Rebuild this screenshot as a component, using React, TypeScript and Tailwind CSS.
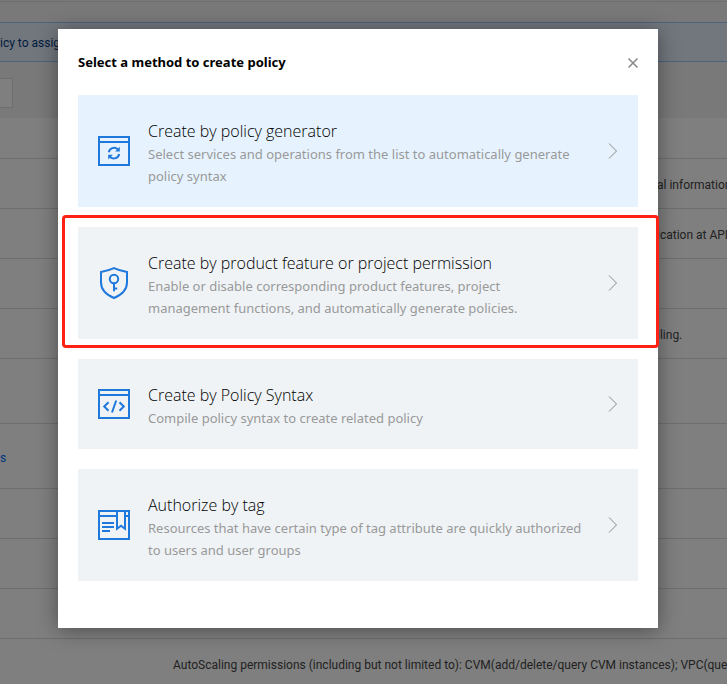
import type { ReactNode } from 'react'

interface Method {
  title: string
  description: string
  icon: ReactNode
  active?: boolean
  marked?: boolean
}

interface Row {
  height: string
  link?: string
  text?: string
  tail?: string
}

function GeneratorIcon() {
  return (
    <svg width="32" height="30" viewBox="0 0 32 30" fill="none" stroke="#1f78dc" strokeWidth="2">
      <path d="M1 1h30v28H1zM1 6h30" />
      <path d="M10.8 16.300a5.400 5.400 0 0 1 9-3M21.200 18a5.400 5.400 0 0 1-9 3" />
      <path d="M21.800 10.800v4.700h-4.700zM10.200 23.500v-4.700h4.700z" fill="#1f78dc" stroke="none" />
    </svg>
  )
}

function ShieldIcon() {
  return (
    <svg width="32" height="32" viewBox="0 0 32 32" fill="none" stroke="#1f78dc" strokeWidth="2">
      <path d="M16 1.200C12 3 8 4.200 3 5v10.500C3 23 8.500 27.800 16 31c7.500-3.200 13-8 13-15.500V5c-5-.8-9-2-13-3.800z" />
      <circle cx="16" cy="12" r="4.200" />
      <path d="M16 16v8.200M16 21.500h3.200" />
    </svg>
  )
}

function SyntaxIcon() {
  return (
    <svg width="32" height="30" viewBox="0 0 32 30" fill="none" stroke="#1f78dc" strokeWidth="2">
      <path d="M1 1h30v28H1zM1 6h30" />
      <path d="M10.500 13.200 6.200 17.500l4.300 4.300M21.500 13.200l4.300 4.300-4.300 4.300M18.200 11.500l-4.200 12" />
    </svg>
  )
}

function TagIcon() {
  return (
    <svg width="32" height="30" viewBox="0 0 32 30" fill="none" stroke="#1f78dc" strokeWidth="2">
      <path d="M1 1h30v28H1zM1 6h18M27 6h4" />
      <path d="M4 13h12M4 17h12M4 21h8" />
      <path d="M19 1v17.800l4-3 4 3V1" />
    </svg>
  )
}

const methods: Method[] = [
  {
    title: 'Create by policy generator',
    description: 'Select services and operations from the list to automatically generate policy syntax',
    icon: <GeneratorIcon />,
    active: true,
  },
  {
    title: 'Create by product feature or project permission',
    description:
      'Enable or disable corresponding product features, project management functions, and automatically generate policies.',
    icon: <ShieldIcon />,
    marked: true,
  },
  {
    title: 'Create by Policy Syntax',
    description: 'Compile policy syntax to create related policy',
    icon: <SyntaxIcon />,
  },
  {
    title: 'Authorize by tag',
    description:
      'Resources that have certain type of tag attribute are quickly authorized to users and user groups',
    icon: <TagIcon />,
  },
]

const rows: Row[] = [
  { height: 'h-10' },
  { height: 'h-[50px]', tail: 'al information' },
  { height: 'h-[50px]', tail: 'ication at API' },
  { height: 'h-[50px]' },
  { height: 'h-[50px]', tail: 'lling.' },
  { height: 'h-[65px]' },
  { height: 'h-[65px]', link: 's' },
  { height: 'h-[50px]' },
  { height: 'h-[50px]' },
  { height: 'h-[50px]' },
  {
    height: 'h-[50px]',
    text: 'AutoScaling permissions (including but not limited to): CVM(add/delete/query CVM instances); VPC(query',
  },
]

function PolicyTable() {
  return (
    <table className="w-full table-fixed border-collapse bg-white text-left">
      <colgroup>
        <col className="w-[173px]" />
        <col className="w-[484px]" />
        <col />
      </colgroup>
      <tbody>
        {rows.map((row, i) => (
          <tr key={i} className={`border-b border-[#dddddd] ${row.height}`}>
            <td className="p-0 pt-1">
              {row.link && (
                <a href="#policy" className="text-[#006eff]">
                  {row.link}
                </a>
              )}
            </td>
            {row.text ? (
              <td colSpan={2} className="p-0 pt-1 whitespace-nowrap">
                {row.text}
              </td>
            ) : (
              <>
                <td className="p-0" />
                <td className="p-0 pt-1 whitespace-nowrap">{row.tail}</td>
              </>
            )}
          </tr>
        ))}
      </tbody>
    </table>
  )
}

function MethodCard({ title, description, icon, active, marked }: Method) {
  return (
    <li className="relative">
      <button
        type="button"
        className={`flex w-full items-center px-5 pt-6 pb-5 text-left ${active ? 'bg-[#e6f3ff]' : 'bg-[#eff3f6]'}`}
      >
        <span className="-mt-1 mr-[18px] flex-shrink-0">{icon}</span>
        <span className="min-w-0 flex-1">
          <span className="block font-['Open_Sans',sans-serif] text-base leading-6 font-light text-black">
            {title}
          </span>
          <span className="block text-[13px] leading-[22px] text-[#999999]">{description}</span>
        </span>
        <svg
          width="10"
          height="16"
          viewBox="0 0 10 16"
          className="-mt-1 ml-6 flex-shrink-0"
          fill="none"
          stroke="#888888"
        >
          <path d="m1 .5 7.500 7.500L1 15.500" />
        </svg>
      </button>
      {marked && (
        <span className="pointer-events-none absolute -top-3 -right-[21px] -bottom-[9px] -left-4 rounded border-3 border-[#ff2114]" />
      )}
    </li>
  )
}

export default function App() {
  return (
    <div className="relative h-screen overflow-hidden bg-[#f2f2f2] font-['Roboto','Open_Sans',sans-serif] text-xs text-[#444444]">
      <div className="h-0.5 border-b border-[#dddddd]" />
      <div className="mt-5 flex h-10 items-center border-y border-[#97c7ff] bg-[#e5eefc] pt-0.5 text-[#003b80]">
        icy to assig
      </div>
      <div className="flex h-14 items-center pt-1.5">
        <input
          type="text"
          aria-label="Filter policies"
          className="h-[30px] w-[13px] border border-l-0 border-[#dddddd] bg-white"
        />
      </div>
      <PolicyTable />

      <div className="absolute inset-0 flex items-start justify-center bg-black/50 pt-[29px] pr-[11px] font-['Noto_Sans','Open_Sans',sans-serif]">
        <div
          role="dialog"
          aria-labelledby="dialog-title"
          className="w-full max-w-[600px] bg-white px-5 pb-[47px] shadow-[0_2px_20px_rgba(0,0,0,0.4)]"
        >
          <div className="flex h-[66px] items-center justify-between pt-0.5">
            <h2 id="dialog-title" className="text-[13px] font-bold text-black">
              Select a method to create policy
            </h2>
            <button type="button" aria-label="Close">
              <svg width="10" height="10" viewBox="0 0 10 10" stroke="#888888" strokeWidth="1.500">
                <path d="m.5.5 9 9M9.500.5l-9 9" />
              </svg>
            </button>
          </div>
          <ul className="flex flex-col gap-5">
            {methods.map((method) => (
              <MethodCard key={method.title} {...method} />
            ))}
          </ul>
        </div>
      </div>
    </div>
  )
}
